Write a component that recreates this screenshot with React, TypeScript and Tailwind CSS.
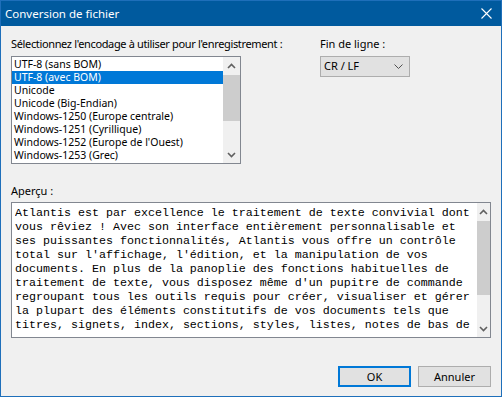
import React from 'react';

const encodings = [
  'UTF-8 (sans BOM)',
  'UTF-8 (avec BOM)',
  'Unicode',
  'Unicode (Big-Endian)',
  'Windows-1250 (Europe centrale)',
  'Windows-1251 (Cyrillique)',
  'Windows-1252 (Europe de l\'Ouest)',
  'Windows-1253 (Grec)',
];

const preview = [
  'Atlantis est par excellence le traitement de texte convivial dont',
  'vous rêviez ! Avec son interface entièrement personnalisable et',
  'ses puissantes fonctionnalités, Atlantis vous offre un contrôle',
  "total sur l'affichage, l'édition, et la manipulation de vos",
  'documents. En plus de la panoplie des fonctions habituelles de',
  "traitement de texte, vous disposez même d'un pupitre de commande",
  'regroupant tous les outils requis pour créer, visualiser et gérer',
  'la plupart des éléments constitutifs de vos documents tels que',
  'titres, signets, index, sections, styles, listes, notes de bas de',
  'page, commentaires, champs, tableaux, images et objets incorporés.',
];

function Chevron({ up }: { up?: boolean }) {
  return (
    <svg width="9" height="6" viewBox="0 0 9 6" className="block">
      <polyline
        points={up ? '1,5 4.5,1.5 8,5' : '1,1 4.5,4.5 8,1'}
        fill="none"
        stroke="#606060"
        strokeWidth="1.6"
      />
    </svg>
  );
}

function ScrollBar({ thumbTop, thumbH }: { thumbTop: number; thumbH: number }) {
  return (
    <div className="relative w-[17px] h-full bg-[#f0f0f0] flex flex-col justify-between">
      <div className="h-[17px] flex items-center justify-center">
        <Chevron up />
      </div>
      <div className="h-[17px] flex items-center justify-center">
        <Chevron />
      </div>
      <div
        className="absolute left-0 right-0 bg-[#cdcdcd]"
        style={{ top: thumbTop, height: thumbH }}
      />
    </div>
  );
}

export default function App() {
  return (
    <div
      className="w-[502px] h-[397px] flex flex-col bg-[#f0f0f0] border border-[#1e6fba] text-[11px] text-black"
      style={{ fontFamily: '"Noto Sans", sans-serif' }}
    >
      <div className="h-[25px] bg-[#005a9e] flex items-center justify-between pl-[4px] pr-[9px] text-white text-[11.5px]">
        <span>Conversion de fichier</span>
        <svg width="11" height="11" viewBox="0 0 11 11">
          <path d="M0.5 0.5 L10.5 10.5 M10.5 0.5 L0.5 10.5" stroke="white" strokeWidth="1.1" />
        </svg>
      </div>

      <div className="flex-1 flex flex-col pl-[10px] pr-[10px] pt-[10px]">
        <div className="flex">
          <div className="flex flex-col w-[309px]">
            <div className="h-[16px] leading-[16px] whitespace-nowrap tracking-[-0.35px]">
              Sélectionnez l'encodage à utiliser pour l'enregistrement :
            </div>
            <div className="mt-[4px] w-[230px] h-[108px] border border-[#828790] bg-white flex">
              <div className="flex-1 flex flex-col pt-[1px] text-[10.5px]">
                {encodings.map((e, i) => (
                  <div
                    key={e}
                    className={
                      'h-[13px] leading-[13px] pl-[2px] whitespace-nowrap ' +
                      (i === 1 ? 'bg-[#0078d7] text-white' : '')
                    }
                  >
                    {e}
                  </div>
                ))}
              </div>
              <ScrollBar thumbTop={18} thumbH={46} />
            </div>
          </div>
          <div className="flex flex-col">
            <div className="h-[16px] leading-[16px] whitespace-nowrap">Fin de ligne :</div>
            <div className="mt-[4px] w-[90px] h-[21px] border border-[#adadad] bg-[#e1e1e1] flex items-center justify-between pl-[3px] pr-[6px]">
              <span>CR / LF</span>
              <svg width="9" height="5" viewBox="0 0 9 5">
                <polyline points="0.5,0.5 4.5,4.5 8.5,0.5" fill="none" stroke="#505050" strokeWidth="1" />
              </svg>
            </div>
          </div>
        </div>

        <div className="mt-[19px] h-[16px] leading-[16px]">Aperçu :</div>
        <div className="mt-[3px] w-[480px] h-[136px] border border-[#828790] bg-white flex">
          <div className="flex-1 pl-[3px] pt-[3px]">
            <div
              className="h-[128px] overflow-hidden text-[11.67px] leading-[14px] whitespace-pre"
              style={{ fontFamily: '"Liberation Mono", "Courier New", monospace' }}
            >
              {preview.map((l, i) => (
                <div key={i}>{l}</div>
              ))}
            </div>
          </div>
          <ScrollBar thumbTop={18} thumbH={74} />
        </div>

        <div className="mt-[28px] flex justify-end gap-[7px]">
          <button className="w-[73px] h-[21px] border-2 border-[#0078d7] bg-[#e1e1e1] leading-none">OK</button>
          <button className="w-[73px] h-[21px] border border-[#adadad] bg-[#e1e1e1] leading-none">Annuler</button>
        </div>
      </div>
    </div>
  );
}
